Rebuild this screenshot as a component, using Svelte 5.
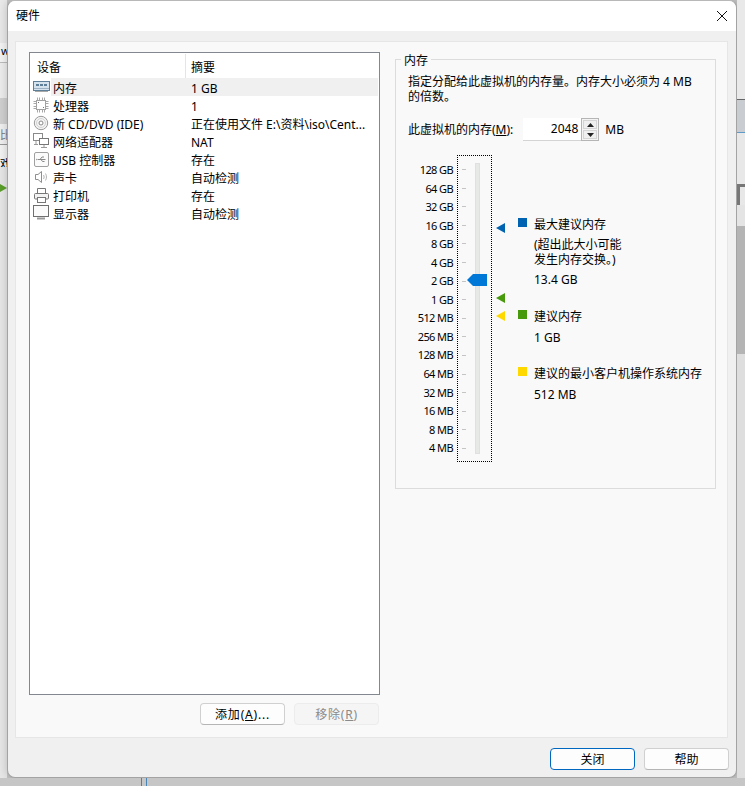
<script>
	const devices = [
		{ icon: "memory", name: "内存", value: "1 GB", selected: true },
		{ icon: "cpu", name: "处理器", value: "1" },
		{ icon: "disc", name: "新 CD/DVD (IDE)", value: "正在使用文件 E:\\资料\\iso\\Cent..." },
		{ icon: "net", name: "网络适配器", value: "NAT" },
		{ icon: "usb", name: "USB 控制器", value: "存在" },
		{ icon: "sound", name: "声卡", value: "自动检测" },
		{ icon: "printer", name: "打印机", value: "存在" },
		{ icon: "display", name: "显示器", value: "自动检测" }
	];

	const sizes = [
		"128 GB", "64 GB", "32 GB", "16 GB", "8 GB", "4 GB", "2 GB", "1 GB",
		"512 MB", "256 MB", "128 MB", "64 MB", "32 MB", "16 MB", "8 MB", "4 MB"
	];
</script>

<div class="desktop">
	<!-- bits of the app behind the dialog -->
	<div class="strip left">
		<div class="s1"></div>
		<div class="s2">w</div>
		<div class="s3"></div>
		<div class="s4"></div>
		<div class="s5">比</div>
		<div class="s6">戏</div>
		<div class="s7"><span class="arrow"></span></div>
	</div>

	<div class="window">
		<div class="titlebar">
			<span>硬件</span>
			<svg class="close" width="12" height="12" viewBox="0 0 12 12"><path d="M1 1l10 10M11 1L1 11" stroke="#111" stroke-width="1" fill="none" /></svg>
		</div>
		<div class="panel">
			<div class="left-col">
				<div class="list">
					<div class="head">
						<div class="h1">设备</div>
						<div class="h2">摘要</div>
					</div>
					{#each devices as d}
						<div class="row">
							<div class="ico">
								{#if d.icon === "memory"}
									<svg width="17" height="12" viewBox="0 0 17 12" fill="none"><rect x=".5" y=".5" width="16" height="9" fill="#d5e3ef" stroke="#5f7f99" /><path d="M3 4h3M7 4h3M11 4h3" stroke="#5f7f99" stroke-width="2" /><path d="M1 7.500h15" stroke="#9db2c4" /><path d="M2 10.500h13" stroke="#a8a8a8" /></svg>
								{:else if d.icon === "cpu"}
									<svg width="16" height="16" viewBox="0 0 16 16" fill="none"><rect x="3.500" y="3.500" width="9" height="9" fill="#fff" stroke="#a0a0a0" /><path d="M4.500 .5v3M6.500 .5v3M9.500 .5v3M11.500 .5v3M4.500 12.500v3M6.500 12.500v3M9.500 12.500v3M11.500 12.500v3M.5 4.500h3M.5 6.500h3M.5 9.500h3M.5 11.500h3M12.500 4.500h3M12.500 6.500h3M12.500 9.500h3M12.500 11.500h3" stroke="#a8a8a8" /><path d="M5 5h1v1H5zM10 10h1v1h-1z" fill="#777" /></svg>
								{:else if d.icon === "disc"}
									<svg width="16" height="16" viewBox="0 0 16 16" fill="none"><circle cx="8" cy="8" r="6.700" fill="#f4f4f4" stroke="#999" /><circle cx="8" cy="8" r="4.500" stroke="#d2d2d2" /><circle cx="8" cy="8" r="2" fill="#fff" stroke="#888" /></svg>
								{:else if d.icon === "net"}
									<svg width="17" height="16" viewBox="0 0 17 16" fill="none"><rect x=".5" y=".5" width="9" height="7" fill="#fff" stroke="#8a8a8a" /><rect x="6.500" y="5.500" width="9" height="6" fill="#fff" stroke="#777" /><path d="M11 12v2M8 14.500h6M3 8v3M1 11.500h4" stroke="#999" /></svg>
								{:else if d.icon === "usb"}
									<svg width="15" height="15" viewBox="0 0 15 15" fill="none"><rect x=".5" y=".5" width="14" height="14" rx="1.500" fill="#fbfbfb" stroke="#a0a0a0" /><path d="M3.500 7.500h8M6 7.500l2-2.500h2M7 7.500l1.500 2h2" stroke="#888" /><path d="M3 6.500l-1 1 1 1z" fill="#888" /></svg>
								{:else if d.icon === "sound"}
									<svg width="14" height="14" viewBox="0 0 14 14" fill="none"><path d="M1.500 4.500h2.500l3.500-3v11l-3.500-3H1.500z" fill="#fff" stroke="#8f8f8f" /><path d="M9.500 5c.8 1.300.8 2.700 0 4M11.500 3.500c1.300 2.200 1.300 4.800 0 7" stroke="#b5b5b5" /></svg>
								{:else if d.icon === "printer"}
									<svg width="15" height="15" viewBox="0 0 15 15" fill="none"><path d="M3.500 5V.5h8V5" stroke="#777" fill="#fff" /><rect x=".5" y="5.500" width="14" height="5.500" rx="1" fill="#f2f2f2" stroke="#777" /><rect x="3.500" y="9.500" width="8" height="5" fill="#fff" stroke="#777" /></svg>
								{:else}
									<svg width="17" height="16" viewBox="0 0 17 16" fill="none"><rect x=".5" y=".5" width="15" height="11" fill="#fbfbfb" stroke="#6f6f6f" /><path d="M4 13.500h8" stroke="#999" stroke-width="2" /></svg>
								{/if}
							</div>
							<div class="name" class:selected={d.selected}>{d.name}</div>
							<div class="value" class:selected={d.selected}>{d.value}</div>
						</div>
					{/each}
				</div>
				<div class="list-btns">
					<button class="btn">添加(<u>A</u>)...</button>
					<button class="btn off">移除(<u>R</u>)</button>
				</div>
			</div>

			<div class="group">
				<div class="legend">内存</div>
				<p class="intro">指定分配给此虚拟机的内存量。内存大小必须为 4 MB<br />的倍数。</p>
				<div class="amount">
					<span>此虚拟机的内存(<u>M</u>):</span>
					<div class="spin">
						<div class="spin-val">2048</div>
						<div class="spin-btns">
							<div class="sb"><svg width="7" height="4" viewBox="0 0 7 4"><path d="M3.500 0L7 4H0z" fill="#222" /></svg></div>
							<div class="sb"><svg width="7" height="4" viewBox="0 0 7 4"><path d="M3.500 4L7 0H0z" fill="#222" /></svg></div>
						</div>
					</div>
					<span>MB</span>
				</div>

				<div class="scale">
					<div class="labels">
						{#each sizes as s}
							<div>{s}</div>
						{/each}
					</div>
					<div class="slider">
						<div class="ticks">
							{#each sizes as s}
								<div class="tick"></div>
							{/each}
						</div>
						<div class="track"></div>
						<svg class="thumb" width="20" height="12" viewBox="0 0 20 12"><path d="M0 6L6 0h14v12H6z" fill="#0078d7" /></svg>
					</div>
					<div class="markers">
						<svg class="mk mk-max" width="9" height="10" viewBox="0 0 9 10"><path d="M0 5l9-5v10z" fill="#0063b1" /></svg>
						<svg class="mk mk-rec" width="9" height="10" viewBox="0 0 9 10"><path d="M0 5l9-5v10z" fill="#489a0d" /></svg>
						<svg class="mk mk-min" width="9" height="10" viewBox="0 0 9 10"><path d="M0 5l9-5v10z" fill="#ffd800" /></svg>
					</div>
					<div class="info">
						<div class="item max">
							<i style="background:#0063b1"></i>
							<div>
								<div>最大建议内存</div>
								<div class="note">(超出此大小可能<br />发生内存交换。)</div>
								<div class="num big">13.4 GB</div>
							</div>
						</div>
						<div class="item rec">
							<i style="background:#489a0d"></i>
							<div>
								<div>建议内存</div>
								<div class="num">1 GB</div>
							</div>
						</div>
						<div class="item min">
							<i style="background:#ffd800"></i>
							<div>
								<div>建议的最小客户机操作系统内存</div>
								<div class="num">512 MB</div>
							</div>
						</div>
					</div>
				</div>
			</div>
		</div>
		<div class="footer">
			<button class="btn default">关闭</button>
			<button class="btn">帮助</button>
		</div>
	</div>

	<div class="strip right">
		<div class="r1"></div>
		<div class="r2"></div>
		<div class="r3"></div>
		<div class="r4"></div>
		<div class="r5"></div>
		<div class="r6"></div>
		<div class="r7"></div>
		<div class="r8"></div>
	</div>

	<div class="under">
		<div class="under-lines"></div>
	</div>
</div>

<style>
	:global(body) {
		margin: 0;
	}

	.desktop {
		width: 745px;
		height: 786px;
		overflow: hidden;
		display: grid;
		grid-template-columns: 7px 730px 8px;
		grid-template-rows: 778px 8px;
		background: #c4c4c4;
		font-family: "Noto Sans", "Noto Sans CJK SC", sans-serif;
		font-size: 12px;
		color: #000;
		line-height: 18px;
	}

	.strip {
		display: flex;
		flex-direction: column;
		overflow: hidden;
		background: #e4e4e4;
	}

	.left .s1 { height: 43px; background: #e8e8e8; }
	.left .s2 { height: 19px; background: #f3f3f3; border-bottom: 1px solid #bbb; font-size: 11px; padding-left: 1px; line-height: 15px; }
	.left .s3 { height: 35px; background: #ececec; }
	.left .s4 { height: 26px; background: #cfcfcf; }
	.left .s5 { height: 20px; background: #efefef; border-bottom: 1px solid #999; color: #777; font-size: 11px; line-height: 22px; }
	.left .s6 { height: 22px; background: #f2f2f2; font-size: 11px; line-height: 38px; overflow: hidden; }
	.left .s7 { flex: 1; background: #e6e6e6; }

	.arrow {
		display: block;
		margin-top: 17px;
		width: 0;
		height: 0;
		border-left: 7px solid #5a9e2a;
		border-top: 4px solid transparent;
		border-bottom: 4px solid transparent;
	}

	.right .r1 { height: 99px; background: #e9e9e9; }
	.right .r2 { height: 1px; background: #666; }
	.right .r3 { height: 32px; background: #c9ccd0; }
	.right .r4 { height: 1px; background: #5f9bc9; }
	.right .r5 { height: 51px; background: #e8e8e8; }
	.right .r6 { height: 21px; background: #e8e8e8; border-top: 3px solid #777; box-sizing: border-box; border-left: 3px solid #777; }
	.right .r7 { height: 128px; background: #b4b4b4; margin-top: 21px; }
	.right .r8 { flex: 1; background: #dedede; }

	.under {
		grid-column: 1 / 4;
		background: #c6c6c6;
		padding-left: 141px;
	}

	.under-lines {
		width: 6px;
		height: 8px;
		box-sizing: border-box;
		border-left: 1px solid #777;
		border-right: 1px solid #4a86b5;
	}

	.window {
		display: flex;
		flex-direction: column;
		background: #f0f0f0;
		border: 1px solid #a3a3a3;
		border-top-color: #b8b8b8;
		border-radius: 8px;
		box-sizing: border-box;
		box-shadow: 0 0 8px rgba(0, 0, 0, 0.2);
		overflow: hidden;
	}

	.titlebar {
		height: 30px;
		flex: none;
		background: #fff;
		display: flex;
		align-items: center;
		justify-content: space-between;
		padding: 0 3px 0 8px;
		font-size: 12px;
	}

	.close {
		margin-right: 5px;
		margin-top: -1px;
	}

	.panel {
		margin: 10px 8px 0 7px;
		height: 697px;
		flex: none;
		box-sizing: border-box;
		background: #f9f9f9;
		border: 1px solid #e6e6e6;
		display: flex;
	}

	.left-col {
		width: 351px;
		padding: 10px 0 0 13px;
		flex: none;
	}

	.list {
		height: 643px;
		box-sizing: border-box;
		border: 1px solid #828790;
		background: #fff;
	}

	.head {
		display: flex;
		height: 25px;
	}

	.h1 {
		width: 148px;
		padding-left: 7px;
		border-right: 1px solid #e5e5e5;
		margin-top: 1px;
		line-height: 28px;
	}

	.h2 {
		padding-left: 5px;
		line-height: 30px;
	}

	.row {
		display: flex;
		height: 18px;
		width: 348px;
	}

	.ico {
		width: 21px;
		flex: none;
		display: flex;
		align-items: center;
		justify-content: center;
		padding-left: 1px;
		box-sizing: border-box;
	}

	.name {
		width: 132px;
		flex: none;
		padding: 2px 0 0 2px;
	}

	.value {
		flex: 1;
		padding: 2px 0 0 6px;
		white-space: nowrap;
		overflow: hidden;
	}

	.selected {
		background: #f0f0f0;
	}

	.list-btns {
		display: flex;
		justify-content: flex-end;
		gap: 9px;
		margin-top: 8px;
		width: 350px;
	}

	.list-btns .btn {
		letter-spacing: 0.8px;
	}

	.btn {
		width: 85px;
		height: 22px;
		padding: 2px 0 0;
		box-sizing: border-box;
		background: #fdfdfd;
		border: 1px solid #d0d0d0;
		border-bottom-color: #b5b5b5;
		border-radius: 4px;
		font: inherit;
		line-height: 18px;
		color: #000;
	}

	.btn.off {
		background: #f5f5f5;
		border-color: #ececec;
		color: #8a8a8a;
	}

	.btn.default {
		border: 1px solid #0067c0;
	}

	.group {
		position: relative;
		margin: 17px 0 0 15px;
		width: 321px;
		height: 430px;
		box-sizing: border-box;
		border: 1px solid #dcdcdc;
		padding: 0 12px;
	}

	.legend {
		position: absolute;
		top: -8px;
		left: 5px;
		padding: 0 3px;
		background: #f9f9f9;
	}

	.intro {
		margin: 14px 0 0;
		line-height: 15px;
	}

	.amount {
		display: flex;
		align-items: center;
		margin-top: 14px;
		height: 24px;
	}

	.spin {
		display: flex;
		width: 76px;
		height: 23px;
		margin: -1px 6px 0 10px;
		box-sizing: border-box;
		background: #fff;
		border-bottom: 1px solid #d4d4d4;
	}

	.spin-val {
		width: 58px;
		flex: none;
		text-align: right;
		padding-right: 3px;
		box-sizing: border-box;
		line-height: 22px;
	}

	.spin-btns {
		flex: 1;
		display: flex;
		flex-direction: column;
		background: #f4f4f4;
		border: 1px solid #b5b5b5;
		box-sizing: border-box;
		padding: 1px;
		gap: 1px;
		margin-bottom: -1px;
	}

	.sb {
		flex: 1;
		background: #efefef;
		border: 1px solid #d4d4d4;
		display: flex;
		align-items: center;
		justify-content: center;
	}

	.scale {
		display: flex;
		margin-top: 13px;
		margin-left: -12px;
	}

	.labels {
		width: 57px;
		flex: none;
		text-align: right;
		font-size: 11px;
		padding-top: 6px;
		line-height: 18.55px;
		letter-spacing: -0.6px;
	}

	.slider {
		position: relative;
		width: 35px;
		height: 307px;
		flex: none;
		margin-left: 4px;
		box-sizing: border-box;
		border: 1px dotted #000;
	}

	.ticks {
		padding: 13px 0 0 4px;
		display: flex;
		flex-direction: column;
		gap: 17.6px;
	}

	.tick {
		width: 4px;
		height: 1px;
		background: #c4c4c4;
	}

	.track {
		position: absolute;
		left: 17px;
		top: 7px;
		width: 3px;
		height: 289px;
		background: #e6e9e6;
		border: 1px solid #e0e0e0;
	}

	.thumb {
		position: absolute;
		left: 9px;
		top: 118px;
	}

	.markers {
		position: relative;
		width: 26px;
		flex: none;
	}

	.mk {
		position: absolute;
		left: 4px;
	}

	.mk-max { top: 68px; }
	.mk-rec { top: 138px; }
	.mk-min { top: 156px; }

	.info {
		padding-top: 61px;
	}

	.item {
		display: flex;
		gap: 7px;
		white-space: nowrap;
	}

	.item i {
		width: 9px;
		height: 9px;
		margin-top: 2px;
		flex: none;
	}

	.note {
		margin-top: 3px;
		line-height: 15px;
	}

	.num {
		margin-top: 3px;
	}

	.num.big {
		margin-top: 4px;
	}

	.rec {
		margin-top: 19px;
	}

	.min {
		margin-top: 17.5px;
	}

	.footer {
		flex: 1;
		display: flex;
		justify-content: flex-end;
		gap: 9px;
		padding: 10px 7px 0 0;
	}
</style>
